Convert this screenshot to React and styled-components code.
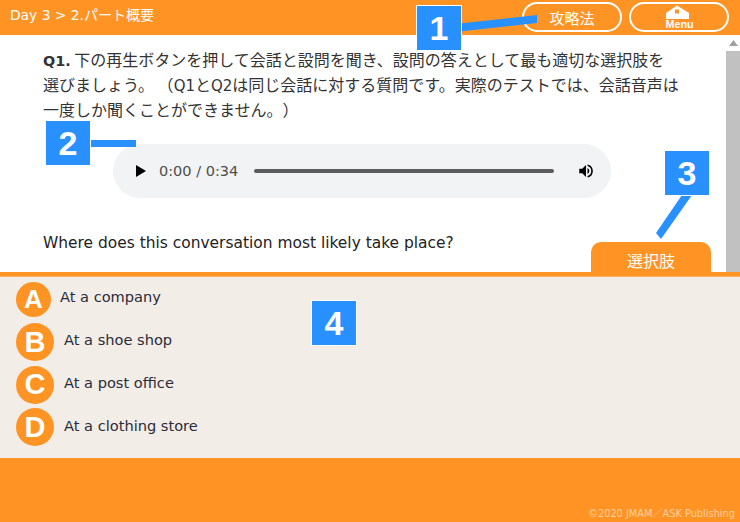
import React from "react";
import styled, { createGlobalStyle } from "styled-components";

const Global = createGlobalStyle`
  html, body { margin: 0; padding: 0; }
  body { font-family: "Noto Sans CJK JP", sans-serif; color: #333; text-spacing-trim: space-all; }
`;
const Page = styled.div`
  position: relative; width: 740px; height: 522px; overflow: hidden;
  display: flex; flex-direction: column; background: #fff;
`;
const Latin = styled.span`
  font-family: "DejaVu Sans", sans-serif; font-size: ${p => p.$size}px; font-weight: ${p => p.$weight || 400};
  line-height: 1;
`;
const Header = styled.header`
  height: 35px; background: #ff9424; display: flex; align-items: flex-start;
  padding: 2px 11px 0 10px; box-sizing: border-box; gap: 7px;
`;
const Crumb = styled.div`
  color: #fff; font-size: 14px; line-height: 25px; margin-right: auto; white-space: pre;
`;
const HeadButton = styled.div`
  width: 100px; height: 30px; box-sizing: border-box; border: 2px solid #fff; border-radius: 15px;
  color: #fff; font-size: 15px; display: flex; align-items: center; justify-content: center;
`;
const Body = styled.div`
  height: 237px; display: flex; position: relative;
`;
const Content = styled.main`
  flex: 1; padding: 12px 30px 0 43px; overflow: hidden;
`;
const Question = styled.p`
  margin: 0; font-size: 16px; line-height: 25px; color: #333; white-space: nowrap;
`;
const Player = styled.div`
  width: 498px; height: 54px; margin: 22px 0 0 70px; border-radius: 27px; background: #f1f3f4;
  display: flex; align-items: center; padding: 0 16px 0 21px; box-sizing: border-box; color: #4d4d4d;
`;
const Time = styled.span`
  font: 14.5px "DejaVu Sans", sans-serif; margin: 0 16px 0 11px; white-space: nowrap;
`;
const Track = styled.div`
  flex: 1; height: 3.5px; border-radius: 2px; background: #5b5b5b;
`;
const Prompt = styled.p`
  margin: 34px 0 0; font: 15.45px/22px "DejaVu Sans", sans-serif; color: #222; white-space: nowrap;
`;
const Scrollbar = styled.div`
  width: 14px; background: #fff; display: flex; flex-direction: column; align-items: center;
`;
const ScrollArrow = styled.div`
  height: 16px; width: 100%; display: flex; align-items: center; justify-content: center;
`;
const ScrollThumb = styled.div`
  flex: 1; width: 14px; background: #c1c1c1;
`;
const ChoiceTab = styled.div`
  position: absolute; left: 591px; top: 207px; width: 120px; height: 30px; background: #ff9424;
  border-radius: 10px 10px 0 0; color: #fff; font-size: 16px;
  display: flex; align-items: center; justify-content: center; padding-top: 6px; box-sizing: border-box;
`;
const Rule = styled.div`
  height: 5px; background: #ff9424; border-bottom: 1px solid #ffb15e; box-sizing: border-box;
`;
const Choices = styled.section`
  height: 181px; background: #f2ede6; padding: 3.5px 0 0 16px; box-sizing: border-box;
  display: flex; flex-direction: column; gap: 4.5px;
`;
const Choice = styled.div`
  display: flex; align-items: center; height: 38px; gap: ${p => p.$gap}px;
`;
const Circle = styled.div`
  width: ${p => p.$size}px; height: ${p => p.$size}px; border-radius: 50%; background: #ff9424;
  color: #fff; font: 700 ${p => p.$size - 9}px "Liberation Sans", sans-serif;
  display: flex; align-items: center; justify-content: center; flex: none;
`;
const ChoiceText = styled.span`
  font: 14.6px "DejaVu Sans", sans-serif; color: #2b2b3a; position: relative; top: ${p => p.$top}px;
`;
const Footer = styled.footer`
  flex: 1; background: #ff9424; display: flex; align-items: flex-end; justify-content: flex-end;
  padding: 0 5px 2px 0;
`;
const Copy = styled.span`
  font-size: 10px; color: #ffd0a0; line-height: 14px;
`;
const Badge = styled.div`
  position: absolute; left: ${p => p.$x}px; top: ${p => p.$y}px; width: 46px; height: 46px;
  background: #2891ff; border: 1px solid #fff; box-sizing: border-box; color: #fff;
  font: 700 34px/44px "Liberation Sans", sans-serif; text-align: center; z-index: 3;
`;
const Callouts = styled.svg`
  position: absolute; inset: 0; z-index: 2; pointer-events: none;
`;
const MenuIcon = () => (
  <svg width="29" height="24" viewBox="0 0 29 24" aria-hidden="true">
    <path d="M1 8 L12 0.5 L24 8 V14 H1 Z" fill="#fff" />
    <rect x="10" y="4.5" width="4" height="4" fill="#ff9424" />
    <text x="0.5" y="23" fontSize="10.8" fontWeight="700" fill="#fff" fontFamily="Liberation Sans, sans-serif">Menu</text>
  </svg>
);
const choices = [
  ["A", "At a company", 35, 9, -3.5],
  ["B", "At a shoe shop", 38, 10, -3],
  ["C", "At a post office", 38, 10, -2.5],
  ["D", "At a clothing store", 38, 10, -2],
];
export default function App() {
  return (
    <Page>
      <Global />
      <Header>
        <Crumb><Latin $size={13.8}>Day 3 &gt; 2.</Latin>パート概要</Crumb>
        <HeadButton>攻略法</HeadButton>
        <HeadButton><MenuIcon /></HeadButton>
      </Header>
      <Body>
        <Content>
          <Question>
            <Latin $size={14.4} $weight={700}>Q1.</Latin> 下の再生ボタンを押して会話と設問を聞き、設問の答えとして最も適切な選択肢を<br />
            選びましょう。 （<Latin $size={15}>Q1</Latin>と<Latin $size={15}>Q2</Latin>は同じ会話に対する質問です。実際のテストでは、会話音声は<br />
            一度しか聞くことができません。）
          </Question>
          <Player>
            <svg width="14" height="14" viewBox="0 0 14 14"><path d="M2 1 L12 7 L2 13 Z" fill="#000" /></svg>
            <Time>0:00 / 0:34</Time>
            <Track />
            <svg width="18" height="18" viewBox="0 0 24 24" style={{ marginLeft: 23 }}><path d="M3 9v6h4l5 5V4L7 9H3zm13.5 3A4.5 4.5 0 0 0 14 8v8a4.5 4.5 0 0 0 2.5-4zM14 3.2v2.1a7 7 0 0 1 0 13.4v2.1a9 9 0 0 0 0-17.6z" fill="#000" /></svg>
          </Player>
          <Prompt>Where does this conversation most likely take place?</Prompt>
        </Content>
        <Scrollbar>
          <ScrollArrow><svg width="9" height="6" viewBox="0 0 9 6"><path d="M4.5 0 L9 6 H0 Z" fill="#a0a0a0" /></svg></ScrollArrow>
          <ScrollThumb />
        </Scrollbar>
        <ChoiceTab>選択肢</ChoiceTab>
      </Body>
      <Rule />
      <Choices>
        {choices.map(([l, t, s, g, top]) => (
          <Choice key={l} $gap={g}>
            <Circle $size={s}>{l}</Circle>
            <ChoiceText $top={top}>{t}</ChoiceText>
          </Choice>
        ))}
      </Choices>
      <Footer><Copy><Latin $size={9.8}>©2020 JMAM</Latin>／<Latin $size={9.8}>ASK Publishing</Latin></Copy></Footer>
      <Callouts width="740" height="522" viewBox="0 0 740 522">
        <path d="M455 32 L537 23 V15 L455 24 Z" fill="#2891ff" />
        <rect x="88" y="140" width="48" height="7" fill="#2891ff" />
        <path d="M682 195 L692 195 L661 239 L656 233 Z" fill="#2891ff" />
      </Callouts>
      <Badge $x={416} $y={5}>1</Badge>
      <Badge $x={45} $y={120}>2</Badge>
      <Badge $x={664} $y={150}>3</Badge>
      <Badge $x={311} $y={300}>4</Badge>
    </Page>
  );
}
